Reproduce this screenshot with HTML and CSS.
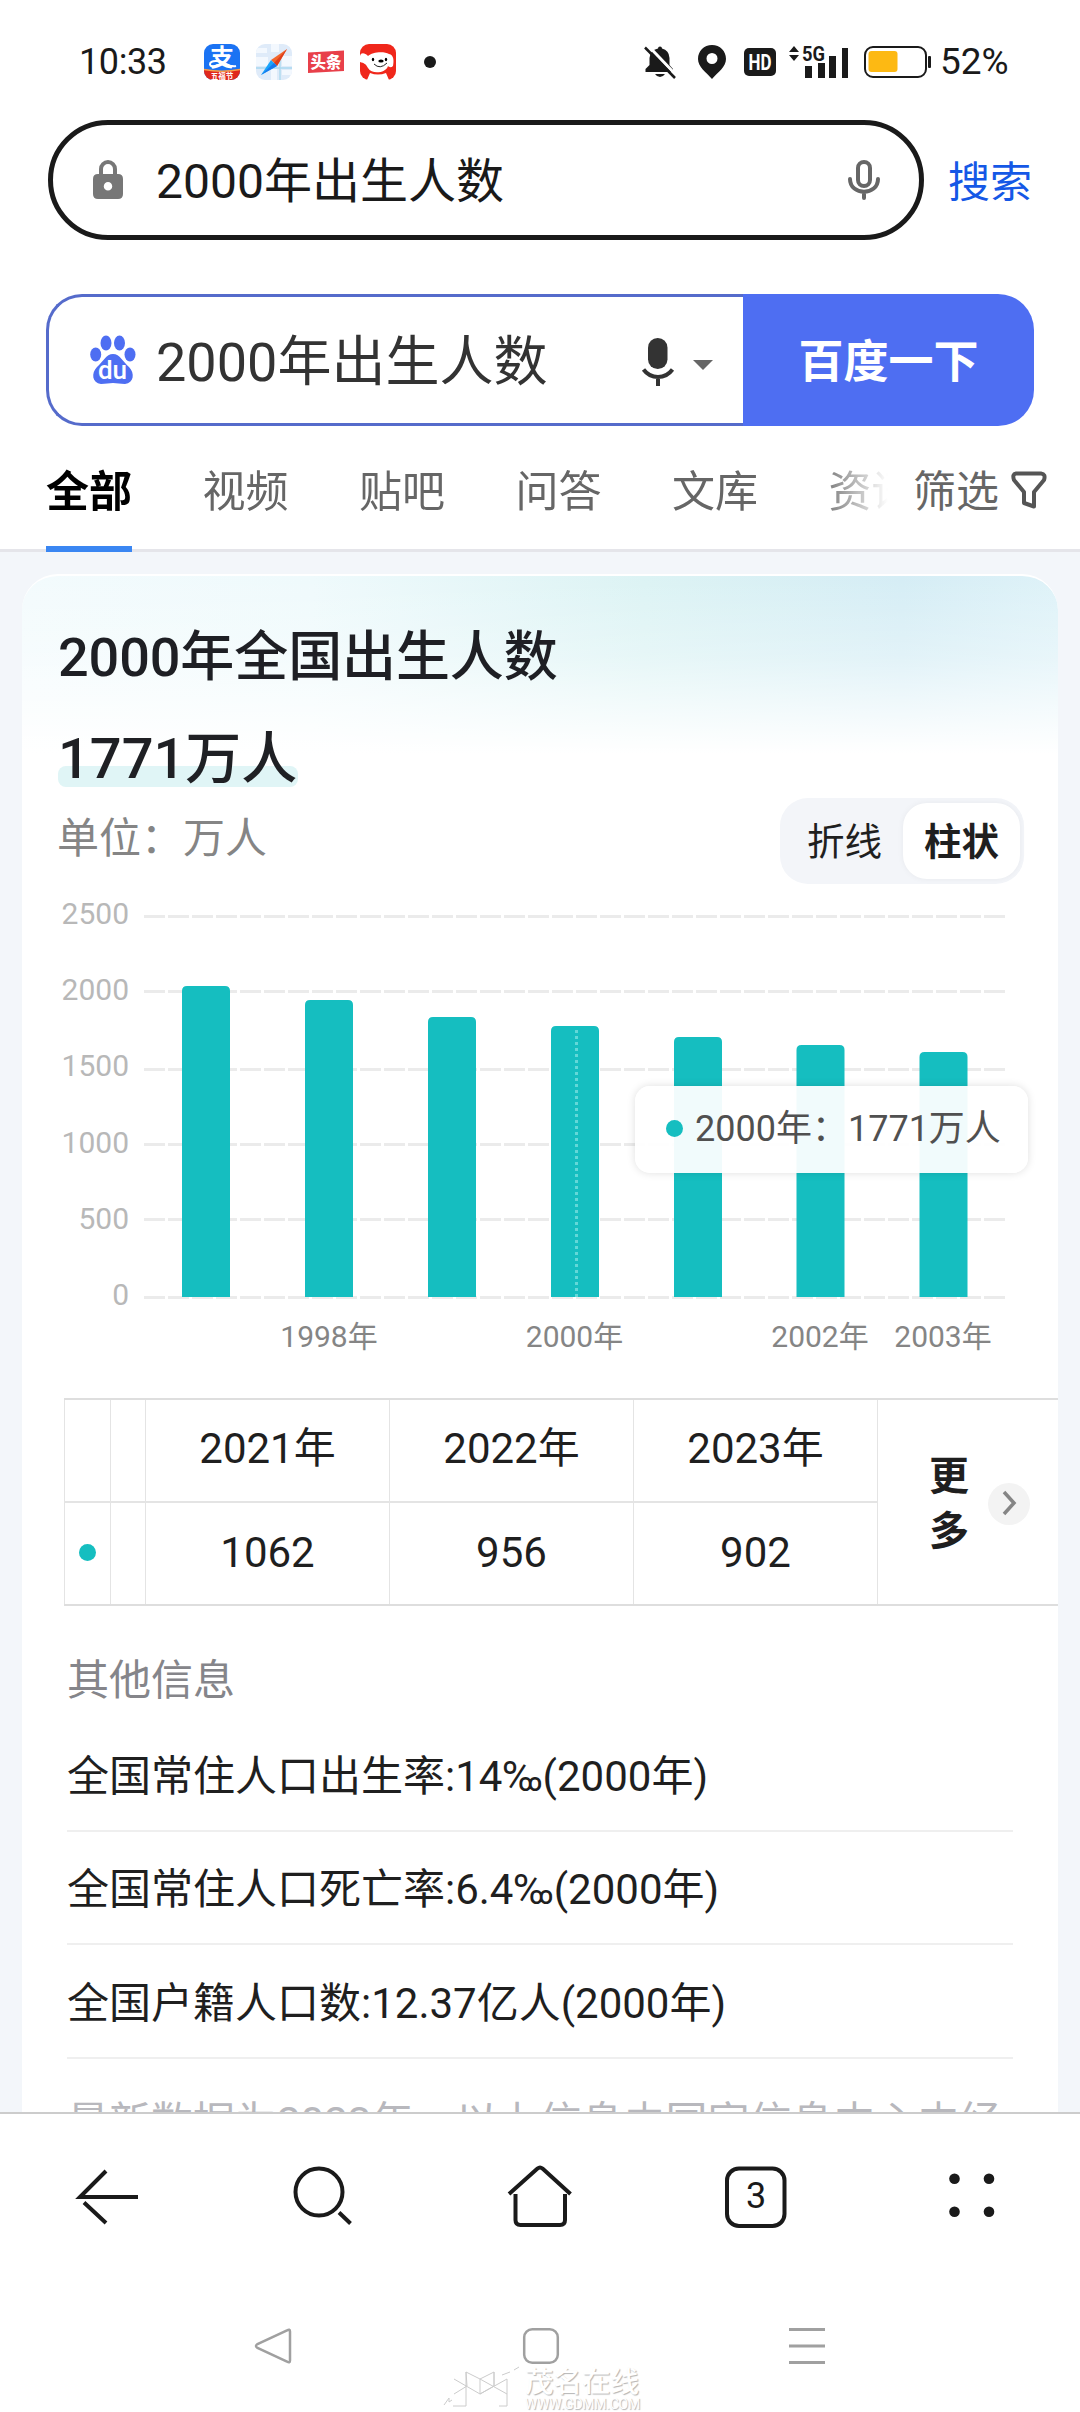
FILE: index.html
```html
<!DOCTYPE html>
<html lang="zh-CN">
<head>
<meta charset="utf-8">
<title>2000年出生人数</title>
<link rel="stylesheet" href="styles.css">
</head>
<body>
<div class="screen">
  <header class="status">
    <span class="time">10:33</span>
    <div class="apps">
      <svg width="36" height="36" viewBox="0 0 36 36">
        <defs><clipPath id="app"><rect width="36" height="36" rx="9"/></clipPath></defs>
        <g clip-path="url(#app)">
          <rect width="36" height="36" fill="#1b73f3"/>
          <path d="M0 25Q18 29 36 25V36H0Z" fill="#e0281c"/>
          <path d="M0 25.500Q18 29 36 25.500" stroke="#f6a04a" stroke-width="1.500" fill="none"/>
          <text class="app-alipay" x="18" y="21.500">支</text>
          <path d="M14 21C4 26 3 16 13 17S25 24 32 22" stroke="#fff" stroke-width="2" fill="none"/>
          <text class="app-promo" x="18" y="34.500">五福节</text>
        </g>
      </svg>
      <svg width="36" height="36" viewBox="0 0 36 36">
        <g clip-path="url(#app)">
          <rect width="36" height="36" fill="#dfebf9"/>
          <path d="M0 4H11V9H0ZM15 0H23V8H15ZM0 13H12V22H0ZM26 12H36V22H26ZM15 25H21V36H15ZM26 26H36V31H26Z" fill="#f3f8fe"/>
          <path d="M0 24H36M24 14V36" stroke="#a9d8ef" stroke-width="1.300"/>
        </g>
        <path d="M31 5L15 16L21 22Z" fill="#f2662c"/><path d="M31 5L18 19L21 22Z" fill="#de3f1d"/>
        <path d="M5 31L15 16L21 22Z" fill="#1aa4fb"/><path d="M5 31L18 19L21 22Z" fill="#1679ee"/>
      </svg>
      <svg width="36" height="36" viewBox="0 0 36 36">
        <path d="M0 8.500L36 6.500V27L0 29Z" fill="#e8404a"/>
        <text class="app-toutiao" x="18" y="23.500">头条</text>
      </svg>
      <svg width="36" height="36" viewBox="0 0 36 36">
        <rect width="36" height="36" rx="9" fill="#f0271b"/>
        <path d="M0 12C1 8 5 9 8 12C12 8 24 7 29 10C34 11 34 17 33 22C31 24 29 23 28 22C26 29 12 31 8 24C6 20 4 19 0 18Z" fill="#fff"/>
        <path d="M10 29Q18 32 26 29L29 36H7Z" fill="#fff"/>
        <ellipse cx="13" cy="15.500" rx="1.200" ry="1.700"/><ellipse cx="26" cy="15.500" rx="1.200" ry="1.700"/><ellipse cx="21" cy="17" rx="2.700" ry="1.600"/>
        <path d="M14 20Q20 26 27 19" stroke="#222" stroke-width="1" fill="none"/>
      </svg>
      <i class="more-dot"></i>
    </div>
    <div class="signals">
      <svg width="32" height="34" viewBox="0 0 32 34">
        <path d="M16 1.500Q18 1.500 18 3.500Q25 5 25.500 13V20L29 24V27H1.500V24L5.500 20V13Q6 5 14 3.500Q14 1.500 16 1.500ZM11 29H21Q19 32 16 32Q13 32 11 29Z" fill="#1a1a1a"/>
        <path d="M4 .5L33 31" stroke="#fff" stroke-width="3"/><path d="M1 2.500L31 33" stroke="#1a1a1a" stroke-width="2.500"/>
      </svg>
      <svg class="s-pin" width="28" height="36" viewBox="0 0 28 36">
        <path fill-rule="evenodd" d="M14 1C6 1 0 7 0 15C0 23 8 28 14 35C20 28 28 23 28 15C28 7 22 1 14 1ZM14 9a5.500 5.500 0 1 1 0 11a5.500 5.500 0 1 1 0-11Z" fill="#1a1a1a"/>
      </svg>
      <svg class="s-hd" width="32" height="28" viewBox="0 0 32 28">
        <rect width="32" height="28" rx="5" fill="#1a1a1a"/><text class="hd" x="16" y="21.500" textLength="23" lengthAdjust="spacingAndGlyphs">HD</text>
      </svg>
      <svg class="s-net" width="60" height="34" viewBox="0 0 60 34">
        <path d="M0 7L5 1L10 7ZM0 10H10L5 16Z" fill="#1a1a1a"/>
        <text class="g5" x="13" y="16" textLength="23" lengthAdjust="spacingAndGlyphs">5G</text>
        <path d="M16 21h7v12h-7ZM29 18h7v15h-7ZM40 11h7v22h-7ZM53 3h6v30h-6Z" fill="#1a1a1a"/>
      </svg>
      <svg class="s-bat" width="68" height="32" viewBox="0 0 68 32">
        <rect x="1" y="1" width="61" height="30" rx="8" fill="none" stroke="#1a1a1a" stroke-width="2"/>
        <rect x="4.500" y="5" width="29" height="21" rx="3" fill="#fdb913"/><rect x="64" y="10" width="3" height="12" rx="1" fill="#1a1a1a"/>
      </svg>
      <span class="pct">52%</span>
    </div>
  </header>

  <div class="urlbar">
    <div class="url">
      <svg class="lock" width="30" height="40" viewBox="0 0 30 40">
        <path d="M8 16V9a7 7 0 0 1 14 0V16" fill="none" stroke="#777" stroke-width="4"/>
        <path fill-rule="evenodd" d="M5 14H25Q30 14 30 19V34Q30 39 25 39H5Q0 39 0 34V19Q0 14 5 14ZM15 22a4 4 0 0 0 0 8.500a4 4 0 0 0 0-8.500Z" fill="#777"/>
      </svg>
      <span class="url-text">2000年出生人数</span>
      <svg class="mic" width="32" height="42" viewBox="0 0 32 42">
        <g fill="none" stroke="#666" stroke-width="4" stroke-linecap="round"><rect x="10" y="3" width="12" height="24" rx="6"/><path d="M2 20C2 37 30 37 30 20M16 34V39"/></g>
      </svg>
    </div>
    <span class="go">搜索</span>
  </div>

  <div class="search">
    <div class="search-input">
      <svg class="paw" width="46" height="50" viewBox="0 0 46 50">
        <g fill="#4e6ef2">
          <ellipse cx="16" cy="8" rx="5.500" ry="7.500"/><ellipse cx="29.500" cy="8" rx="5.500" ry="7.500"/>
          <ellipse cx="5.700" cy="19.500" rx="5.500" ry="7"/><ellipse cx="40" cy="19.500" rx="5.500" ry="7"/>
          <path d="M23 19C16 19 13 27 7 32C1 38 2 48 11 49C16 49 19 48 23 48S30 49 35 49C44 48 45 38 39 32C33 27 30 19 23 19Z"/>
        </g>
        <text class="du" x="22.500" y="44">du</text>
      </svg>
      <span class="query">2000年出生人数</span>
      <svg class="voice" width="32" height="48" viewBox="0 0 32 48">
        <rect x="6" y="0" width="19.500" height="31" rx="9.700" fill="#333"/>
        <path d="M1.500 31.500Q7 39 16 39Q25 39 30.500 31.500M16 39V48" fill="none" stroke="#333" stroke-width="4"/>
      </svg>
      <svg class="caret" width="20" height="10" viewBox="0 0 20 10"><path d="M0 0H20L10 10Z" fill="#666"/></svg>
    </div>
    <div class="search-btn">百度一下</div>
  </div>

  <nav class="tabs">
    <div class="tab-list">
      <span class="tab active">全部</span><span class="tab">视频</span><span class="tab">贴吧</span><span class="tab">问答</span><span class="tab">文库</span><span class="tab">资讯</span>
    </div>
    <div class="filter"><span>筛选</span>
      <svg width="36" height="38" viewBox="0 0 36 38"><path d="M5 2.500H30Q35 3 33 9L23 21V35.500L13 32V21L3 9Q1 3 5 2.500Z" fill="none" stroke="#555" stroke-width="4" stroke-linejoin="round"/></svg>
    </div>
  </nav>

  <main class="content">
    <section class="card">
      <h1 class="title">2000年全国出生人数</h1>
      <div class="answer"><span>1771万人</span></div>
      <div class="unit-row">
        <span class="unit">单位：万人</span>
        <div class="toggle"><span>折线</span><span class="on">柱状</span></div>
      </div>
      <div class="chart">
        <svg width="1036" height="480" viewBox="22 890 1036 480">
          <g class="grid">
            <path d="M144 916.500H1005M144 991.500H1005M144 1069.500H1005M144 1144.500H1005M144 1219.500H1005M144 1297.500H1005"/>
          </g>
          <g class="ylab">
            <text x="129" y="924">2500</text><text x="129" y="1000">2000</text><text x="129" y="1076">1500</text><text x="129" y="1153">1000</text><text x="129" y="1229">500</text><text x="129" y="1305">0</text>
          </g>
          <g class="bars">
            <path d="M182 1297V991q0-5 5-5h38q5 0 5 5V1297Z"/>
            <path d="M305 1297V1005q0-5 5-5h38q5 0 5 5V1297Z"/>
            <path d="M428 1297V1022q0-5 5-5h38q5 0 5 5V1297Z"/>
            <path d="M551 1297V1031q0-5 5-5h38q5 0 5 5V1297Z"/>
            <path d="M674 1297V1042q0-5 5-5h38q5 0 5 5V1297Z"/>
            <path d="M796.500 1297V1050q0-5 5-5h38q5 0 5 5V1297Z"/>
            <path d="M919.500 1297V1057q0-5 5-5h38q5 0 5 5V1297Z"/>
          </g>
          <path class="pointer" d="M576.500 1030V1297"/>
          <g class="xlab">
            <text x="329" y="1347">1998年</text><text x="574.500" y="1347">2000年</text><text x="820" y="1347">2002年</text><text x="943" y="1347">2003年</text>
          </g>
        </svg>
        <div class="tooltip"><i class="dot"></i>2000年：1771万人</div>
      </div>
      <div class="data">
        <div class="grid-table">
          <div class="cell"></div><div class="cell"></div><div class="cell">2021年</div><div class="cell">2022年</div><div class="cell">2023年</div>
          <div class="cell"><i class="dot"></i></div><div class="cell"></div><div class="cell">1062</div><div class="cell">956</div><div class="cell">902</div>
        </div>
        <div class="more">
          <span class="more-text">更多</span>
          <svg width="42" height="42" viewBox="0 0 42 42"><circle cx="21" cy="21" r="21" fill="#f3f3f3"/><path d="M16 9L26 20L16 31" fill="none" stroke="#858585" stroke-width="3.500"/></svg>
        </div>
      </div>
      <div class="info">
        <div class="info-head">其他信息</div>
        <div class="info-row">全国常住人口出生率:14‰(2000年)</div>
        <div class="info-row">全国常住人口死亡率:6.4‰(2000年)</div>
        <div class="info-row">全国户籍人口数:12.37亿人(2000年)</div>
        <div class="source">最新数据为2023年，以上信息由国家信息中心中经</div>
      </div>
    </section>
  </main>

  <footer class="bottom">
    <div class="toolbar">
      <svg width="72" height="72" viewBox="72 2161 72 72"><path d="M138 2197H80L106 2171M84 2202.500L106 2223" fill="none" stroke="#1a1a1a" stroke-width="4"/></svg>
      <svg width="72" height="72" viewBox="288 2161 72 72"><g fill="none" stroke="#1a1a1a" stroke-width="4"><circle cx="319" cy="2192" r="23.500"/><path d="M339 2212.500L350.500 2223.500"/></g></svg>
      <svg width="72" height="72" viewBox="504 2161 72 72"><g fill="none" stroke="#1a1a1a" stroke-width="4" stroke-linejoin="round"><path d="M509 2194L537.500 2168.500Q540 2166.500 542.500 2168.500L570.500 2194M515.500 2194V2220Q515.500 2225 520.500 2225H560Q565 2225 565 2220V2194"/></g></svg>
      <svg width="72" height="72" viewBox="720 2161 72 72"><rect x="727" y="2168.500" width="57.500" height="57.500" rx="12" fill="none" stroke="#1a1a1a" stroke-width="4"/><text class="count" x="756" y="2208">3</text></svg>
      <svg width="72" height="72" viewBox="936 2161 72 72"><g fill="#1a1a1a"><circle cx="954.500" cy="2178.700" r="5.300"/><circle cx="989" cy="2178.700" r="5.300"/><circle cx="954.500" cy="2211.700" r="5.300"/><circle cx="989" cy="2211.700" r="5.300"/></g></svg>
    </div>
    <div class="sysnav">
      <svg width="40" height="40" viewBox="0 0 40 40"><path d="M34 4.500Q37 2.500 37 5.500V34.500Q37 37.500 34 35.500L4.500 22Q1.500 20 4.500 18Z" fill="none" stroke="#a0a0a0" stroke-width="2.500"/></svg>
      <svg width="40" height="40" viewBox="0 0 40 40"><rect x="4.200" y="3.200" width="33.600" height="33.600" rx="8" fill="none" stroke="#a0a0a0" stroke-width="2.500"/></svg>
      <svg width="40" height="40" viewBox="0 0 40 40"><path d="M2 3.500H38M2 20H38M2 36.500H38" stroke="#a0a0a0" stroke-width="3"/></svg>
    </div>
    <div class="watermark">
      <svg width="77" height="36" viewBox="0 0 77 36"><path d="M12 7L38 22L65 7M12 22L25 14L24 0L38 7L65 22M38 7V22L52 14V0L38 7M24 0V34H11M52 0V14M65 7V34H57M2 33L7 26V30L10 28M60 3L68 0M72-2L77-5" fill="none" stroke="#cccccc" stroke-width="1"/></svg>
      <div class="wm-text"><span class="wm-name">茂名在线</span><span class="wm-url">WWW.GDMM.COM</span></div>
    </div>
  </footer>
</div>
</body>
</html>
```

FILE: styles.css
```css
* { box-sizing: border-box; }
body { margin: 0; background: #fff; font-family: Roboto, "Noto Sans CJK SC", sans-serif; color: #1f1f1f; }
svg { display: block; flex: none; overflow: visible; }
h1 { margin: 0; }

.screen { width: 1080px; height: 2412px; display: flex; flex-direction: column; overflow: hidden; background: #fff; }

.status { height: 120px; flex: none; display: flex; align-items: center; padding: 4px 70px 0 79px; color: #1a1a1a; }
.time { width: 125px; font-size: 36px; line-height: 40px; letter-spacing: -0.400px; }
.apps { display: flex; align-items: center; gap: 16px; }
.more-dot { width: 12px; height: 12px; border-radius: 50%; background: #1a1a1a; margin-left: 12px; }
.app-alipay { font-size: 24px; font-weight: 700; fill: #fff; text-anchor: middle; }
.app-promo { font-size: 7.500px; font-weight: 700; fill: #fff; text-anchor: middle; }
.app-toutiao { font-size: 15.500px; font-weight: 900; fill: #fff; text-anchor: middle; }
.signals { margin-left: auto; display: flex; align-items: center; }
.s-pin { margin-left: 22px; }
.s-hd { margin-left: 18px; }
.s-net { margin-left: 13px; }
.s-bat { margin-left: 15px; }
.hd { font-size: 22px; font-weight: 700; fill: #fff; text-anchor: middle; }
.g5 { font-size: 21px; font-weight: 700; fill: #1a1a1a; }
.pct { margin-left: 8px; width: 70px; font-size: 37px; line-height: 40px; white-space: nowrap; }

.urlbar { height: 120px; flex: none; display: flex; align-items: center; padding-left: 48px; gap: 24px; }
.url { width: 876px; height: 120px; border: 5px solid #1a1a1a; border-radius: 60px; display: flex; align-items: center; padding: 0 39px 0 40px; }
.url-text { margin-left: 33px; flex: 1; font-size: 48px; line-height: 60px; padding-top: 4px; color: #1a1a1a; }
.go { font-size: 42px; line-height: 60px; padding-top: 5px; color: #1558e6; }

.search { height: 132px; flex: none; margin: 54px 46px 0; display: flex; }
.search-input { width: 697px; border: 3px solid #556bcb; border-right: 0; border-radius: 36px 0 0 36px; display: flex; align-items: center; padding: 0 31px 0 41px; }
.query { margin-left: 20px; flex: 1; font-size: 54px; line-height: 70px; padding-top: 5px; color: #333; }
.voice { margin-right: 19px; position: relative; top: 2px; left: 1px; }
.caret { position: relative; top: 5px; left: 1px; }
.du { font-size: 26px; font-weight: 500; fill: #fff; text-anchor: middle; }
.search-btn { flex: 1; background: #4e6ef2; border-radius: 0 36px 36px 0; color: #fff; font-size: 45px; font-weight: 700; line-height: 138px; text-align: center; }

.tabs { height: 126px; flex: none; border-bottom: 3px solid #e5e5ea; display: flex; padding-left: 46px; color: #666; font-size: 43px; }
.tab-list { width: 842px; height: 126px; display: flex; gap: 70.500px; overflow: hidden; -webkit-mask-image: linear-gradient(90deg, #000 770px, transparent 842px); mask-image: linear-gradient(90deg, #000 770px, transparent 842px); }
.tab { flex: none; width: 86px; height: 126px; line-height: 132px; }
.tab.active { color: #000; font-weight: 700; border-bottom: 6px solid #3a86f2; }
.filter { margin-left: 25px; display: flex; align-items: center; gap: 12px; height: 132px; line-height: 132px; }
.filter svg { position: relative; top: -2px; }

.content { flex: 1; min-height: 0; overflow: hidden; background: #f3f6fa; padding: 22px 22px 0; }
.card { height: 1700px; border-radius: 36px 36px 0 0; border-top: 2px solid #fff; display: flex; flex-direction: column;
  background: linear-gradient(180deg, rgba(255,255,255,0) 0, rgba(255,255,255,.3) 80px, #fff 178px), linear-gradient(90deg, #f3fbfd 0, #effafc 28%, #dcf3f4 60%, #d5edf5 85%, #def2f8 100%); }
.title { margin: 42px 0 0 36px; font-size: 54px; line-height: 80px; font-weight: 500; letter-spacing: -0.100px; color: #1e1f24; }
.answer { margin: 25px 0 0 36px; height: 72px; font-size: 56px; line-height: 72px; font-weight: 500; color: #1f2024; }
.answer span { display: inline-block; position: relative; isolation: isolate; }
.answer span::before { content: ""; position: absolute; z-index: -1; left: 0; right: -1px; top: 43px; height: 21px; border-radius: 8px; background: #e0f5f6; }
.unit-row { height: 90px; display: flex; justify-content: space-between; align-items: center; padding: 0 34px 0 35px; margin-top: 1px; }
.unit { font-size: 42px; line-height: 60px; padding-bottom: 4px; color: #858585; }
.toggle { width: 244px; height: 86px; border-radius: 28px; background: #f3f5f9; display: flex; align-items: center; padding: 5px 4px; font-size: 37.500px; color: #1f1f1f; }
.toggle span { flex: 1; height: 76px; line-height: 79px; text-align: center; border-radius: 24px; }
.toggle span:first-child { padding-left: 2px; }
.toggle .on { background: #fff; font-weight: 700; flex: 0 0 117px; box-shadow: 0 0 6px rgba(0,0,0,.05); }

.chart { position: relative; height: 480px; flex: none; margin-top: 4px; }
.grid path { stroke: #ebebeb; stroke-width: 3; stroke-dasharray: 21 3; fill: none; }
.bars { fill: #15bec0; }
.pointer { stroke: #62d8d8; stroke-width: 3; stroke-dasharray: 3 3; }
.ylab text { font-size: 30px; fill: #b8b8b8; text-anchor: end; }
.xlab text { font-size: 30px; fill: #858585; text-anchor: middle; }
.tooltip { position: absolute; left: 613px; top: 196px; width: 393px; height: 87px; border-radius: 15px; background: rgba(255,255,255,.94); box-shadow: 0 0 8px rgba(0,0,0,.13); display: flex; align-items: center; padding: 0 0 2px 31px; font-size: 36px; line-height: 50px; color: #505050; white-space: nowrap; }
.dot { display: block; flex: none; width: 17px; height: 17px; border-radius: 50%; background: #15bec0; }
.tooltip .dot { margin-right: 12px; }

.data { height: 208px; flex: none; margin: 28px 0 0 42px; display: flex; border-top: 2px solid #dedede; border-bottom: 2px solid #dedede; }
.grid-table { display: grid; grid-template-columns: 46px 35px 244px 244px 244px; grid-template-rows: 103px 101px; border-left: 1px solid #e4e4e4; font-size: 42px; line-height: 60px; }
.cell { border-right: 1px solid #e4e4e4; display: flex; align-items: center; justify-content: center; padding-bottom: 2px; }
.cell:nth-child(-n+5) { border-bottom: 2px solid #e4e4e4; padding-bottom: 4px; }
.more { flex: 1; display: flex; align-items: center; padding: 3px 0 0 51px; }
.more-text { width: 40px; margin-right: 19px; font-size: 40px; line-height: 55px; font-weight: 700; word-break: break-all; }

.info { margin: 45px 45px 0 45px; font-size: 42px; line-height: 60px; color: #1f1f1f; }
.info-head { color: #85858a; height: 67px; }
.info-row { height: 113.500px; border-bottom: 2px solid #efefef; padding-top: 28.500px; }
.source { padding-top: 34px; color: #b8b8bd; white-space: nowrap; }

.bottom { height: 300px; flex: none; border-top: 2px solid #ccc; background: #fff; position: relative; }
.toolbar { display: flex; justify-content: space-around; padding-top: 47px; }
.count { font-size: 36px; text-anchor: middle; fill: #1a1a1a; }
.sysnav { display: flex; justify-content: space-between; padding: 93px 253px 0; }
.watermark { position: absolute; left: 442px; top: 258px; display: flex; gap: 6px; color: #fff; text-shadow: 1px 1px 1px #b5b5b5; }
.wm-text { display: flex; flex-direction: column; }
.wm-name { font-size: 28.500px; line-height: 22px; height: 25px; font-weight: 500; }
.wm-url { font-size: 14px; line-height: 14px; letter-spacing: -0.250px; }
```
